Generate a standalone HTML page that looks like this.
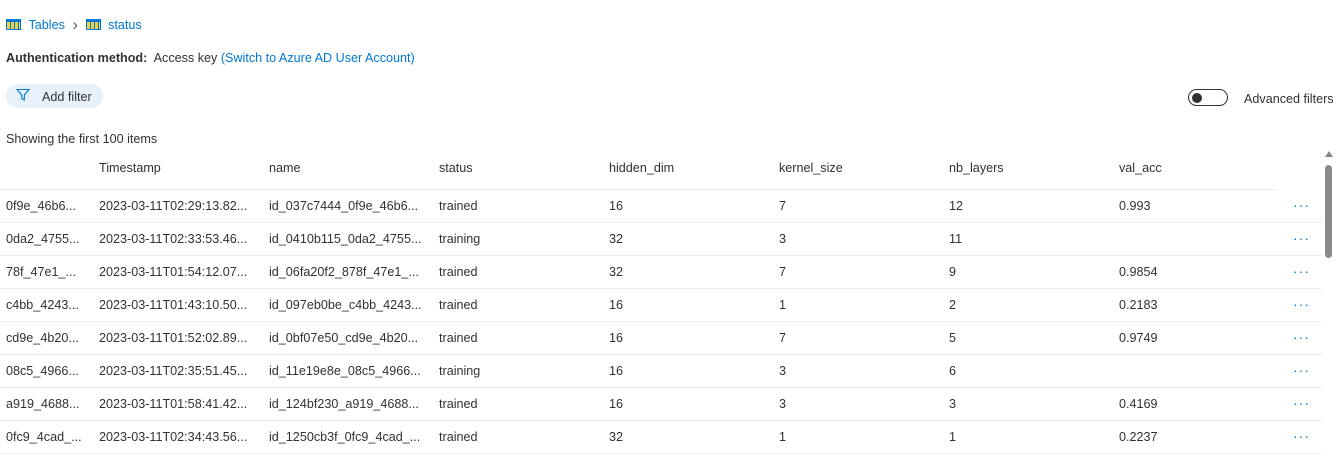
<!DOCTYPE html>
<html><head><style>
body{margin:0;width:1343px;height:454px;overflow:hidden;background:#fff;font-family:"Liberation Sans",sans-serif;font-size:12.6px;color:#323130;position:relative}
.a{position:absolute;white-space:nowrap}
.blue{color:#0078d4}
.ic{display:inline-block;width:15px;height:11px;background:#0078d4;position:relative;vertical-align:-1px}
.ic:after{content:"";position:absolute;left:1px;top:3px;width:13px;height:7px;background:repeating-linear-gradient(90deg,#e8d24a 0 3px,#0078d4 3px 4px),#e8d24a}
.row{position:absolute;left:0;width:1322px;height:33px;border-bottom:1px solid #edebe9}
.c{position:absolute;top:10px;white-space:nowrap;overflow:hidden}
.dots{position:absolute;left:1293px;top:8px;color:#0078d4;font-size:14px;letter-spacing:1px}
</style></head><body>
<div class="a" style="left:6px;top:18px"><span class="ic"></span> <span class="blue" style="margin-left:4px">Tables</span> <span style="color:#605e5c;margin:0 4px;font-size:17px;line-height:12px;vertical-align:-1px">&#x203A;</span> <span class="ic"></span> <span class="blue" style="margin-left:4px">status</span></div>
<div class="a" style="left:6px;top:51px"><b style="font-weight:600">Authentication method:</b>&nbsp; Access key <span class="blue">(Switch to Azure AD User Account)</span></div>
<div class="a" style="left:6px;top:84px;width:97px;height:24px;border-radius:12px;background:#e6f1fb"></div>
<svg class="a" style="left:16px;top:88px" width="14" height="14" viewBox="0 0 14 14"><path d="M1 1.5h12L8.3 7v5L5.7 10.5V7z" fill="none" stroke="#0078d4" stroke-width="1.1"/></svg>
<div class="a" style="left:42px;top:90px">Add filter</div>
<div class="a" style="left:1188px;top:89px;width:40px;height:17px;border:1px solid #323130;border-radius:9px;box-sizing:border-box"></div>
<div class="a" style="left:1192px;top:93px;width:10px;height:10px;border-radius:50%;background:#323130"></div>
<div class="a" style="left:1244px;top:92px">Advanced filters</div>
<div class="a" style="left:6px;top:132px">Showing the first 100 items</div>
<div class="row" style="top:156px;width:1276px">
<div class="c" style="left:99px;top:5px">Timestamp</div><div class="c" style="left:269px;top:5px">name</div><div class="c" style="left:439px;top:5px">status</div><div class="c" style="left:609px;top:5px">hidden_dim</div><div class="c" style="left:779px;top:5px">kernel_size</div><div class="c" style="left:949px;top:5px">nb_layers</div><div class="c" style="left:1119px;top:5px">val_acc</div></div>
<div class="row" style="top:189px"><div class="c" style="left:6px">0f9e_46b6...</div><div class="c" style="left:99px">2023-03-11T02:29:13.82...</div><div class="c" style="left:269px">id_037c7444_0f9e_46b6...</div><div class="c" style="left:439px">trained</div><div class="c" style="left:609px">16</div><div class="c" style="left:779px">7</div><div class="c" style="left:949px">12</div><div class="c" style="left:1119px">0.993</div><div class="dots">···</div></div>
<div class="row" style="top:222px"><div class="c" style="left:6px">0da2_4755...</div><div class="c" style="left:99px">2023-03-11T02:33:53.46...</div><div class="c" style="left:269px">id_0410b115_0da2_4755...</div><div class="c" style="left:439px">training</div><div class="c" style="left:609px">32</div><div class="c" style="left:779px">3</div><div class="c" style="left:949px">11</div><div class="dots">···</div></div>
<div class="row" style="top:255px"><div class="c" style="left:6px">78f_47e1_...</div><div class="c" style="left:99px">2023-03-11T01:54:12.07...</div><div class="c" style="left:269px">id_06fa20f2_878f_47e1_...</div><div class="c" style="left:439px">trained</div><div class="c" style="left:609px">32</div><div class="c" style="left:779px">7</div><div class="c" style="left:949px">9</div><div class="c" style="left:1119px">0.9854</div><div class="dots">···</div></div>
<div class="row" style="top:288px"><div class="c" style="left:6px">c4bb_4243...</div><div class="c" style="left:99px">2023-03-11T01:43:10.50...</div><div class="c" style="left:269px">id_097eb0be_c4bb_4243...</div><div class="c" style="left:439px">trained</div><div class="c" style="left:609px">16</div><div class="c" style="left:779px">1</div><div class="c" style="left:949px">2</div><div class="c" style="left:1119px">0.2183</div><div class="dots">···</div></div>
<div class="row" style="top:321px"><div class="c" style="left:6px">cd9e_4b20...</div><div class="c" style="left:99px">2023-03-11T01:52:02.89...</div><div class="c" style="left:269px">id_0bf07e50_cd9e_4b20...</div><div class="c" style="left:439px">trained</div><div class="c" style="left:609px">16</div><div class="c" style="left:779px">7</div><div class="c" style="left:949px">5</div><div class="c" style="left:1119px">0.9749</div><div class="dots">···</div></div>
<div class="row" style="top:354px"><div class="c" style="left:6px">08c5_4966...</div><div class="c" style="left:99px">2023-03-11T02:35:51.45...</div><div class="c" style="left:269px">id_11e19e8e_08c5_4966...</div><div class="c" style="left:439px">training</div><div class="c" style="left:609px">16</div><div class="c" style="left:779px">3</div><div class="c" style="left:949px">6</div><div class="dots">···</div></div>
<div class="row" style="top:387px"><div class="c" style="left:6px">a919_4688...</div><div class="c" style="left:99px">2023-03-11T01:58:41.42...</div><div class="c" style="left:269px">id_124bf230_a919_4688...</div><div class="c" style="left:439px">trained</div><div class="c" style="left:609px">16</div><div class="c" style="left:779px">3</div><div class="c" style="left:949px">3</div><div class="c" style="left:1119px">0.4169</div><div class="dots">···</div></div>
<div class="row" style="top:420px"><div class="c" style="left:6px">0fc9_4cad_...</div><div class="c" style="left:99px">2023-03-11T02:34:43.56...</div><div class="c" style="left:269px">id_1250cb3f_0fc9_4cad_...</div><div class="c" style="left:439px">trained</div><div class="c" style="left:609px">32</div><div class="c" style="left:779px">1</div><div class="c" style="left:949px">1</div><div class="c" style="left:1119px">0.2237</div><div class="dots">···</div></div>
<div class="a" style="left:1325px;top:151px;width:0;height:0;border-left:4px solid transparent;border-right:4px solid transparent;border-bottom:6px solid #888"></div>
<div class="a" style="left:1325px;top:165px;width:7px;height:93px;border-radius:4px;background:#8a8a8a"></div>
</body></html>
